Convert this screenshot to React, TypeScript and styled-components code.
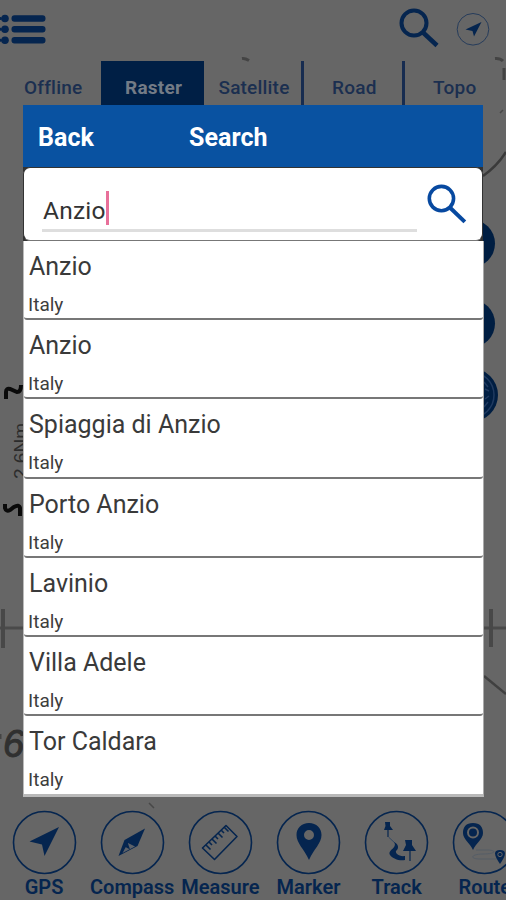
import React from "react";
import styled, { createGlobalStyle } from "styled-components";

const NAVY = "#05254f";

const GlobalStyle = createGlobalStyle`
  * { box-sizing: border-box; }
  body { margin: 0; background: #666; font-family: Roboto, "Liberation Sans", sans-serif; }
`;

const Screen = styled.main`
  position: relative;
  width: 506px;
  height: 900px;
  overflow: hidden;
  background: #666666;
  display: flex;
  flex-direction: column;
  justify-content: space-between;
`;

const MapLayer = styled.svg`
  position: absolute;
  inset: 0;
`;

const TopArea = styled.header`
  position: relative;
  color: ${NAVY};
`;

const Toolbar = styled.div`
  height: 61px;
  display: flex;
  align-items: flex-start;
  padding: 8px 16px 0 0;
`;

const MenuIcon = styled.svg`
  margin: 5px auto 0 0;
`;

const LocateIcon = styled.svg`
  margin: 4px 0 0 17px;
`;

const Tabs = styled.nav`
  display: flex;
  height: 44px;
  padding-left: 3px;
`;

const Tab = styled.div<{ $active?: boolean; $divider?: boolean }>`
  flex: 0 0 100.4px;
  height: 44px;
  padding-top: 15px;
  text-align: center;
  font-size: 19px;
  line-height: 24px;
  font-weight: ${(p) => (p.$active ? 700 : 500)};
  letter-spacing: 0.2px;
  color: ${(p) => (p.$active ? "#737b86" : "#1b2f50")};
  background: ${(p) => (p.$active ? "#001f45" : "transparent")};
  box-shadow: ${(p) =>
    p.$active ? "-2px 0 #001f45" : p.$divider ? "inset -3px 0 #172c50" : "none"};
`;

const Dialog = styled.section`
  position: absolute;
  left: 23px;
  top: 105px;
  width: 461px;
  background: linear-gradient(#333, #333) 0 62px / 460px 74px no-repeat;
`;

const DialogHeader = styled.div`
  width: 460px;
  height: 62px;
  display: grid;
  grid-template-columns: 151px 1fr;
  align-items: center;
  padding: 3px 0 0 15px;
  background: #0952a1;
  color: #fff;
  font-size: 25px;
  font-weight: 700;
  letter-spacing: 0.05px;
`;

const SearchPanel = styled.div`
  width: 460px;
  height: 74px;
  display: flex;
  align-items: flex-start;
  padding: 15px 15px 0 18px;
  background: #fff;
  border: 1px solid #333;
  border-bottom-color: #777;
  border-radius: 7px;
`;

const Field = styled.div`
  width: 377px;
  height: 49px;
  display: flex;
  align-items: flex-end;
  padding: 0 0 3px 1px;
  border-bottom: 3px solid #dedede;
  color: #333;
  font-size: 24.5px;
  line-height: 30px;
  letter-spacing: 0.2px;
`;

const Caret = styled.span`
  width: 3px;
  height: 34px;
  margin-bottom: 1px;
  background: #e8709a;
`;

const SearchGlyph = styled.svg`
  margin: 1px 0 0 10px;
`;

const Results = styled.div`
  background: #fff;
  border-left: 1px solid #bbb;
  border-right: 1px solid #aaa;
  border-bottom: 3px solid #b9b9b9;
`;

const Result = styled.div`
  height: 79.2px;
  padding: 9px 0 0 4px;
  border-bottom: 2px solid #777;
  border-radius: 0 0 3px 3px;

  &:last-child {
    height: 78px;
    border-bottom: 0;
  }
`;

const Place = styled.div`
  padding-left: 1px;
  color: #3a3a3a;
  font-size: 25px;
  line-height: 34px;
  letter-spacing: 0;
`;

const Country = styled.div`
  margin-top: 7px;
  color: #3d3d3d;
  font-size: 19px;
  line-height: 28px;
`;

const BottomBar = styled.footer`
  position: relative;
  display: flex;
  height: 90px;
  color: ${NAVY};
`;

const Tool = styled.div`
  flex: 0 0 88.15px;
  min-width: 0;
  display: flex;
  flex-direction: column;
  align-items: center;
  white-space: nowrap;
`;

const ToolLabel = styled.span`
  margin-top: -1px;
  font-size: 20px;
  line-height: 26px;
  font-weight: 600;
`;

const Magnifier = ({ size, color, weight }: { size: number; color: string; weight: number }) => (
  <svg width={size} height={size} viewBox="0 0 40 40" fill="none" stroke={color}>
    <circle cx="15" cy="15" r="12.500" strokeWidth={weight} />
    <path d="M23.500 24L38 37.500" strokeWidth={weight + 0.5} />
  </svg>
);

const glyphs: Record<string, React.ReactNode> = {
  GPS: <path d="M47 17L17.500 31.500L30 34.500L32.500 46Z" fill={NAVY} />,
  Compass: (
    <g>
      <path d="M45 18.500L24.500 30L18.500 46L37.500 36Z" fill={NAVY} />
      <path d="M28 33L35 36.500L22.500 43Z" fill="#5d6269" />
      <path d="M27.500 32L25.500 37L30 39.500Z" fill={NAVY} />
    </g>
  ),
  Measure: (
    <g fill="none" stroke={NAVY} strokeWidth="1.600" strokeLinejoin="round">
      <path d="M38 15.500L49 26.500L26.500 49.500L14.500 38Z" />
      <path d="M18 35l4.500 4.500M21 32l3 3M24 29l4.500 4.500M27 26l3 3M30 23l4.500 4.500M33 20l3 3M36 17l4.500 4.500" />
    </g>
  ),
  Marker: (
    <path
      fill={NAVY}
      fillRule="evenodd"
      d="M33 13C25.500 13 20.500 18 20.500 25C20.500 33 28 39 33 50C38 39 45.500 33 45.500 25C45.500 18 40.500 13 33 13ZM33 20a5 5 0 1 1 0 10a5 5 0 0 1 0-10Z"
    />
  ),
  Track: (
    <g fill={NAVY}>
      <path d="M21 12h5v4l3 4h-9l1.500-4ZM41 30h7v5l4 6h-13l3-6Z" />
      <path d="M24 20v7M46 40v11" stroke={NAVY} strokeWidth="1.200" />
      <path d="M24.500 27L32 34" stroke="#304764" strokeWidth="1" fill="none" />
      <path d="M30 32C34 38 23 40 26 45C29 49 35 51 41 50L41 46C35 47 31 43 32 41C35 39 35 34 30 32Z" />
    </g>
  ),
  Route: (
    <g fill={NAVY}>
      <path d="M21 13C14 13 11 17 11 23C11 29 18 33 21 40C24 33 31 29 31 23C31 17 28 13 21 13Z" />
      <circle cx="21" cy="22.500" r="5" fill="none" stroke="#666" strokeWidth="2" />
      <path d="M24 40H37C46 41 42 44 31 44C19 44 17 49 28 49H47" fill="none" stroke="#505a66" strokeWidth="0.800" />
      <path d="M48 40c-8 0-5 7 0 14c5-7 8-14 0-14Z" />
      <circle cx="48" cy="44.500" r="2.200" fill="none" stroke="#666" />
    </g>
  ),
};

const tabs = ["Offline", "Raster", "Satellite", "Road", "Topo"];
const places = ["Anzio", "Anzio", "Spiaggia di Anzio", "Porto Anzio", "Lavinio", "Villa Adele", "Tor Caldara"];
const tools = ["GPS", "Compass", "Measure", "Marker", "Track", "Route"];

export default function App() {
  return (
    <Screen>
      <GlobalStyle />
      <MapLayer width="506" height="900" viewBox="0 0 506 900" fill="none">
        <path d="M242 58.500Q245 58 249 60.500M495 58.500Q500 58 503 61" stroke="#444" strokeWidth="3" />
        <path d="M504 68V80" stroke="#444" strokeWidth="3" />
        <path d="M506 152C501 160 493 169 483 176" stroke="#3a3a3a" strokeWidth="2.500" />
        <path d="M500 113l3-3M149 803l5 5" stroke="#484848" strokeWidth="1.500" />
        <g fill="#001e42">
          <circle cx="471" cy="243.500" r="24" />
          <circle cx="471" cy="323.500" r="24" />
          <circle cx="471" cy="395" r="27" />
        </g>
        <g stroke="#1f3a60" strokeWidth="1.500">
          <circle cx="471" cy="395" r="23" />
          <path d="M484 382l4 5M485 389l4 2M485 399l4-3M484 407l4-5" />
        </g>
        <path d="M6 399V392Q6 388 10 389L17 392Q21 392 21 385" stroke="#0a0a0a" strokeWidth="4" />
        <path d="M5 504V508Q6 512 10 510L14 507Q19 504 20 508V516" stroke="#0a0a0a" strokeWidth="4" />
        <text
          transform="translate(27 479) rotate(-90)"
          fill="#2c2c2c"
          fontFamily="Liberation Sans"
          fontSize="19"
        >
          2.6Nm
        </text>
        <path d="M0 628H23M484 628H506" stroke="#4a4a4a" strokeWidth="3" />
        <path d="M3 609V648M491 609V647" stroke="#484848" strokeWidth="4" />
        <path d="M484 676L506 694" stroke="#404040" strokeWidth="2.500" />
        <text x="3" y="757" fill="#303030" stroke="#303030" fontFamily="Liberation Sans" fontSize="38" fontStyle="italic">
          6
        </text>
        <path d="M0 734v5" stroke="#444" strokeWidth="3" />
      </MapLayer>

      <TopArea>
        <Toolbar>
          <MenuIcon width="46" height="34" viewBox="0 0 46 34" fill={NAVY}>
            {[5.5, 16.3, 27.2].map((y) => (
              <g key={y}>
                <circle cx="0.500" cy={y} r="1.500" />
                <circle cx="5" cy={y} r="3.800" />
                <rect x="11.500" y={y - 3.3} width="34" height="6.600" rx="3" />
              </g>
            ))}
          </MenuIcon>
          <Magnifier size={40} color={NAVY} weight={4} />
          <LocateIcon width="34" height="34" viewBox="0 0 34 34">
            <circle cx="17" cy="17.300" r="15.800" fill="none" stroke="#263c5b" strokeWidth="1" />
            <path d="M25.500 10L9.500 17.500L16.500 19L18 24.500Z" fill={NAVY} />
          </LocateIcon>
        </Toolbar>
        <Tabs>
          {tabs.map((name) => (
            <Tab key={name} $active={name === "Raster"} $divider={name === "Satellite" || name === "Road"}>
              {name}
            </Tab>
          ))}
        </Tabs>
      </TopArea>

      <BottomBar>
        {tools.map((name) => (
          <Tool key={name}>
            <svg width="65" height="65" viewBox="0 0 65 65">
              <circle cx="32.500" cy="32.500" r="31" fill="none" stroke={NAVY} strokeWidth="1.600" />
              {glyphs[name]}
            </svg>
            <ToolLabel>{name}</ToolLabel>
          </Tool>
        ))}
      </BottomBar>

      <Dialog>
        <DialogHeader>
          <span>Back</span>
          <span>Search</span>
        </DialogHeader>
        <SearchPanel>
          <Field>
            Anzio
            <Caret />
          </Field>
          <SearchGlyph width="40" height="41" viewBox="0 0 40 41" fill="none" stroke="#0749a0">
            <circle cx="14.500" cy="14.500" r="12.200" strokeWidth="3.600" />
            <path d="M23.500 24L38 38" strokeWidth="4" />
          </SearchGlyph>
        </SearchPanel>
        <Results>
          {places.map((name, i) => (
            <Result key={i}>
              <Place>{name}</Place>
              <Country>Italy</Country>
            </Result>
          ))}
        </Results>
      </Dialog>
    </Screen>
  );
}
